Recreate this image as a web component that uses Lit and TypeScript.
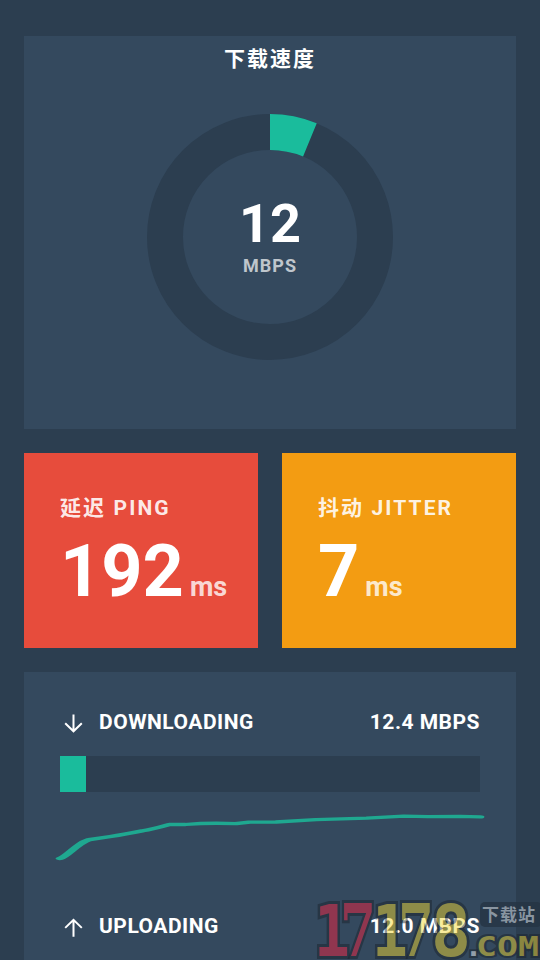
import { LitElement, html, svg, css } from "lit";
import { customElement, property } from "lit/decorators.js";

const ARC = 2 * Math.PI * 105;

@customElement("speed-gauge")
class SpeedGauge extends LitElement {
  @property({ type: Number }) ratio = 0;
  @property() value = "";

  static styles = css`
    :host { display: grid; width: 246px; height: 246px; }
    svg, .center { grid-area: 1 / 1; }
    .ring { fill: none; stroke: #2c3e50; stroke-width: 36; }
    .arc { fill: none; stroke: #1abc9c; stroke-width: 36; }
    .center { text-align: center; padding-top: 81px; }
    .value { font-size: 54px; line-height: 58px; }
    .unit { font-size: 18px; line-height: 24px; margin-top: 1px; letter-spacing: 1px; color: rgba(255, 255, 255, 0.7); }
  `;

  render() {
    return html`
      <svg width="246" height="246" viewBox="0 0 246 246">
        <circle class="ring" cx="123" cy="123" r="105"></circle>
        <circle class="arc" cx="123" cy="123" r="105" transform="rotate(-90 123 123)"
          stroke-dasharray="${ARC * this.ratio} ${ARC}"></circle>
      </svg>
      <div class="center">
        <div class="value">${this.value}</div>
        <div class="unit">MBPS</div>
      </div>`;
  }
}

@customElement("stat-tile")
class StatTile extends LitElement {
  @property() label = "";
  @property() value = "";

  static styles = css`
    :host { display: block; height: 195px; box-sizing: border-box; padding: 39px 0 0 36px; white-space: nowrap; }
    .label { font-size: 21px; line-height: 32px; letter-spacing: 2.1px; color: rgba(255, 255, 255, 0.9); }
    .row { display: flex; align-items: baseline; gap: 6px; line-height: 84px; margin-top: 6px; }
    .value { font-size: 72px; }
    .unit { font-size: 27px; color: rgba(255, 255, 255, 0.8); }
  `;

  render() {
    return html`
      <div class="label">${this.label}</div>
      <div class="row"><span class="value">${this.value}</span><span class="unit">ms</span></div>`;
  }
}

@customElement("transfer-row")
class TransferRow extends LitElement {
  @property() label = "";
  @property() value = "";
  @property() direction = "down";

  static styles = css`
    :host { display: flex; align-items: center; height: 28px; font-size: 21px; letter-spacing: 0.5px; }
    svg { width: 27px; height: 27px; margin-right: 12px; margin-top: 3px; fill: none; stroke: #fff; stroke-width: 2; }
    .value { margin-left: auto; }
  `;

  render() {
    return html`
      <svg viewBox="0 0 27 27">
        ${this.direction === "down"
          ? svg`<path d="M13.5 4.5V21M5.2 13.2L13.5 21.3L21.8 13.2"/>`
          : svg`<path d="M13.5 22.7V6.2M5.2 13.9L13.5 5.8L21.8 13.9"/>`}
      </svg>
      <span>${this.label}</span><span class="value">${this.value}</span>`;
  }
}

@customElement("site-mark")
class SiteMark extends LitElement {
  static styles = css`
    :host { display: block; width: 226px; height: 62px; }
    text { font-weight: 700; paint-order: stroke; stroke: #19212a; stroke-width: 6; stroke-linejoin: miter; opacity: 0.47; }
    .digits { font-family: "DejaVu Sans Mono", monospace; font-size: 72px; }
    .serif { font-family: "DejaVu Serif", serif; }
    .red { fill: #f82240; }
    .olive { fill: #f4d830; }
    .domain { font-family: "DejaVu Sans Mono", monospace; font-size: 27px; stroke-width: 4; }
    .dot { fill: #ffffff; }
    .plate { fill: #263544; opacity: 0.8; }
    .name { font-family: "Noto Sans CJK SC", sans-serif; font-size: 17px; fill: #8995a1; stroke: none; opacity: 1; }
  `;

  render() {
    const digits: [string, number, number, string][] = [
      ["1", 0, 36, "red"],
      ["7", 26, 36, "red serif"],
      ["1", 58, 36, "olive"],
      ["7", 84, 36, "olive serif"],
      ["8", 117, 40, "olive"],
    ];
    return html`
      <svg width="226" height="62" viewBox="0 0 226 62">
        ${digits.map(([d, x, w, c]) => svg`<text class="digits ${c}" x=${x} y="58" textLength=${w}
          lengthAdjust="spacingAndGlyphs">${d}</text>`)}
        <rect class="plate" x="166" y="4" width="62" height="25" rx="5"></rect>
        <text class="name" x="168" y="23" textLength="53">下载站</text>
        <text class="domain dot" x="151" y="58" textLength="17" lengthAdjust="spacingAndGlyphs">.</text>
        <text class="domain olive" x="162" y="58" textLength="63" lengthAdjust="spacingAndGlyphs">COM</text>
      </svg>`;
  }
}

@customElement("app-root")
class AppRoot extends LitElement {
  static styles = css`
    :host {
      display: block; position: relative; box-sizing: border-box; width: 540px; height: 960px;
      overflow: hidden; padding: 36px 24px 0; background: #2c3e50; color: #fff;
      font-family: Roboto, "Noto Sans CJK SC", sans-serif; font-weight: 700;
    }
    .card { background: #34495e; }
    .speed { height: 393px; display: flex; flex-direction: column; align-items: center; }
    .title { font-size: 21px; line-height: 32px; letter-spacing: 2px; margin: 7px 0 39px; }
    .tiles { display: grid; grid-template-columns: 1fr 1fr; gap: 24px; margin: 24px 0; }
    .ping { background: #e74c3c; }
    .jitter { background: #f39c12; }
    .transfers { box-sizing: border-box; height: 400px; padding: 36px 36px 0; }
    .track { height: 36px; margin-top: 20px; background: #2c3e50; }
    .fill { height: 100%; background: #1abc9c; }
    .chart { display: block; width: 420px; height: 48px; margin: 15px 0 57px; overflow: visible; }
    .chart path { fill: none; stroke: #1fa890; stroke-width: 3.3; stroke-linecap: round; stroke-linejoin: round; }
    site-mark { position: absolute; right: 0; bottom: 0; }
  `;

  render() {
    return html`
      <section class="card speed">
        <div class="title">下载速度</div>
        <speed-gauge ratio="0.062" value="12"></speed-gauge>
      </section>
      <section class="tiles">
        <stat-tile class="ping" label="延迟 PING" value="192"></stat-tile>
        <stat-tile class="jitter" label="抖动 JITTER" value="7"></stat-tile>
      </section>
      <section class="card transfers">
        <transfer-row label="DOWNLOADING" value="12.4 MBPS"></transfer-row>
        <div class="track"><div class="fill" style="width:${12.4 / 2}%"></div></div>
        <svg class="chart" viewBox="0 0 157.5 48" preserveAspectRatio="none">
          <path d="M0 51.5C3 49 6 37 11 32.6L19 29.5Q24 27.5 31 23.8Q34 22.8 41 17.5H47Q56 15.5 66 16.7L71 15.2L81 15L96 12.6L115 11.2L129 9.2L138 9.6L150 9.3L157.5 9.8"/>
        </svg>
        <transfer-row label="UPLOADING" value="12.0 MBPS" direction="up"></transfer-row>
      </section>
      <site-mark></site-mark>`;
  }
}
